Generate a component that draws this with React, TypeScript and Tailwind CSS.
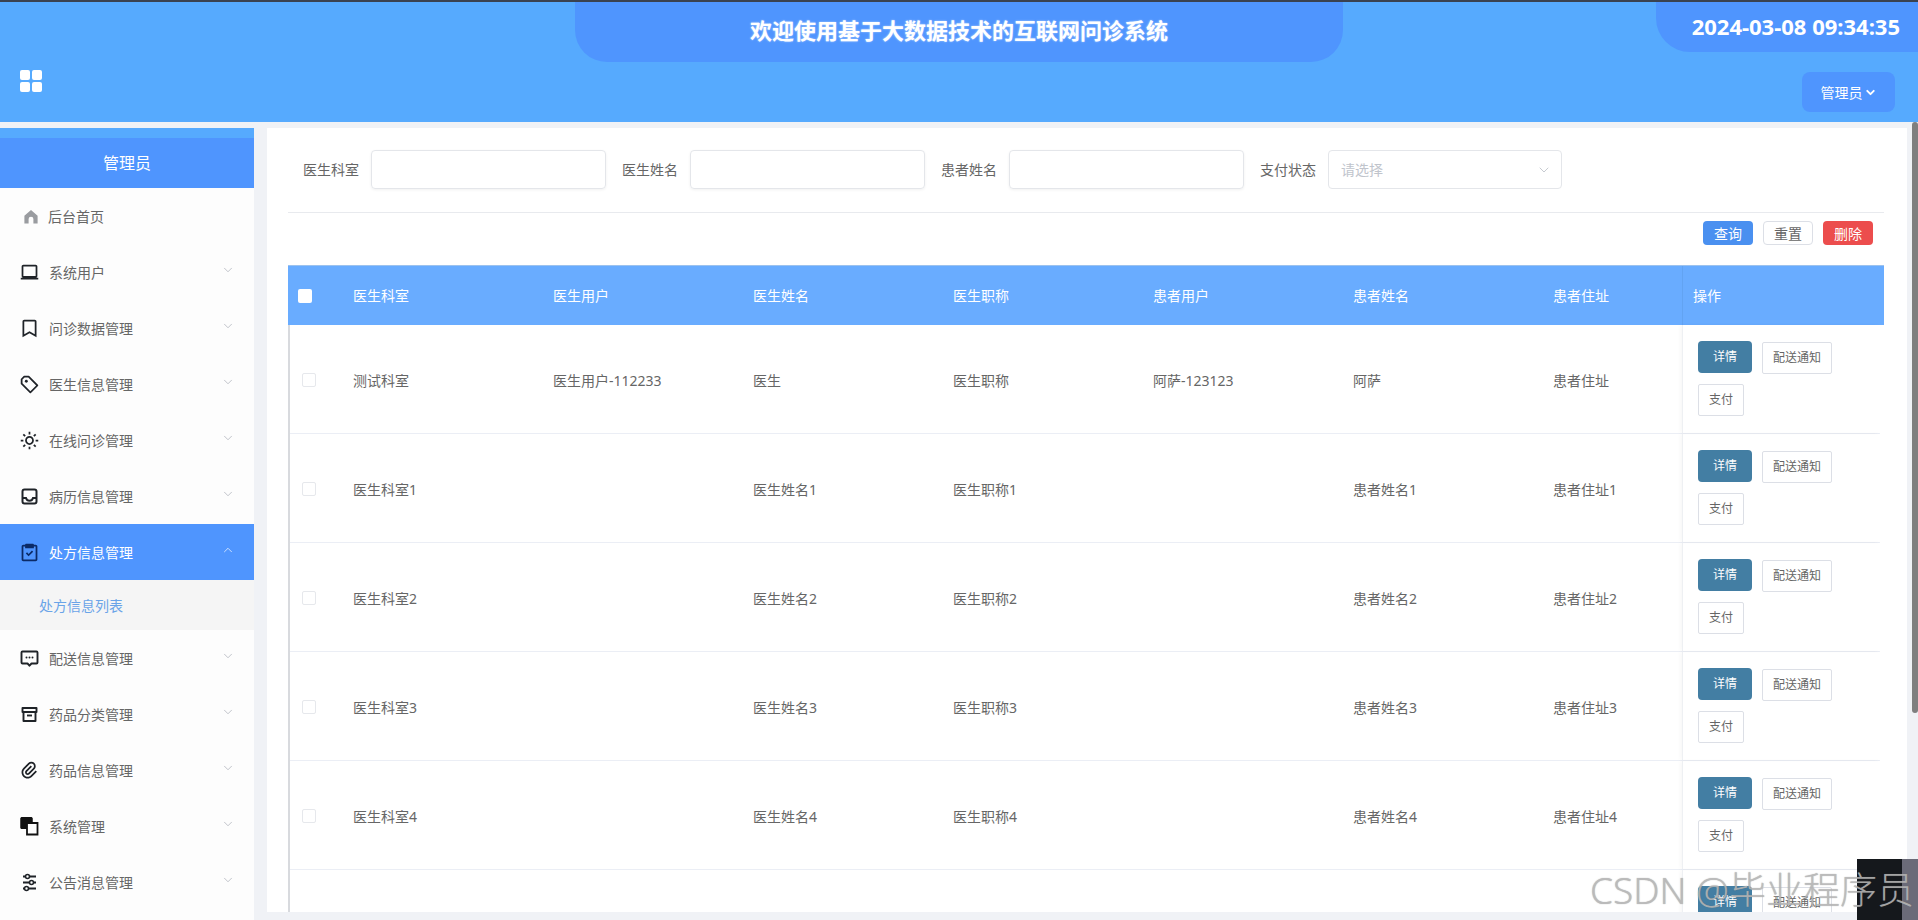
import type { ReactNode } from 'react';
import { ChevronDown, ChevronUp } from 'lucide-react';
import { BiLaptop, BiBookmark, BiPurchaseTagAlt, BiSun, BiTask, BiPaperclip } from 'react-icons/bi';

const iconClass = 'h-[21px] w-[21px] shrink-0 text-[#1f2328]';

function InboxIcon() {
  return (
    <svg viewBox="0 0 21 21" fill="none" className={iconClass}>
      <rect x="3.5" y="3.5" width="14" height="14" rx="2" stroke="currentColor" strokeWidth="2" />
      <path d="M3.5 12h3.5c.5 1.8 1.8 2.8 3.5 2.8s3-1 3.5-2.8h3.5" stroke="currentColor" strokeWidth="2" />
    </svg>
  );
}

function MessageIcon() {
  return (
    <svg viewBox="0 0 21 21" fill="none" className={iconClass}>
      <path
        d="M3.5 3.5h14a1 1 0 0 1 1 1v10a1 1 0 0 1-1 1h-5l-2 2.2-2-2.2h-5a1 1 0 0 1-1-1v-10a1 1 0 0 1 1-1z"
        stroke="currentColor"
        strokeWidth="1.9"
        strokeLinejoin="round"
      />
      <circle cx="7.5" cy="9.5" r="1" fill="currentColor" />
      <circle cx="10.5" cy="9.5" r="1" fill="currentColor" />
      <circle cx="13.5" cy="9.5" r="1" fill="currentColor" />
    </svg>
  );
}

function ArchiveIcon() {
  return (
    <svg viewBox="0 0 21 21" fill="none" className={iconClass}>
      <path d="M3.5 4h14v4h-14zM4.5 8v9h12V8" stroke="currentColor" strokeWidth="1.9" strokeLinejoin="round" />
      <path d="M8 11.5h5" stroke="currentColor" strokeWidth="1.9" />
    </svg>
  );
}

function SlidersIcon() {
  return (
    <svg viewBox="0 0 21 21" fill="none" className={iconClass}>
      <path d="M4 4.5h13M4 10.5h13M4 16.5h13" stroke="currentColor" strokeWidth="1.8" />
      <circle cx="8.5" cy="4.5" r="2" fill="#fdfdfd" stroke="currentColor" strokeWidth="1.6" />
      <circle cx="12.5" cy="10.5" r="2" fill="#fdfdfd" stroke="currentColor" strokeWidth="1.6" />
      <circle cx="7.5" cy="16.5" r="2" fill="#fdfdfd" stroke="currentColor" strokeWidth="1.6" />
    </svg>
  );
}

function CopyIcon() {
  return (
    <svg viewBox="0 0 20 20" className="h-[20px] w-[20px] shrink-0 text-[#111]">
      <rect x="1.5" y="1" width="12" height="12" rx="1.5" fill="currentColor" />
      <path d="M8 7h10.5v11.5H8z" fill="#fdfdfd" stroke="currentColor" strokeWidth="1.8" />
      <path d="M1.5 2.5a1.5 1.5 0 0 1 1.5-1.5h9a1.5 1.5 0 0 1 1.5 1.5V7H8v6H3a1.5 1.5 0 0 1-1.5-1.5z" fill="currentColor" />
    </svg>
  );
}

function HomeIcon() {
  return (
    <svg viewBox="0 0 14 14" className="ml-[4px] mr-[3px] h-[15px] w-[14px] shrink-0 text-[#9a9ca0]">
      <path d="M7 .5 13.6 6.2V14H9.4V9.6a2.4 2.4 0 0 0-4.8 0V14H.4V6.2z" fill="currentColor" />
    </svg>
  );
}

type MenuItem = { label: string; icon: ReactNode; active?: boolean };

const menu: MenuItem[] = [
  { label: '系统用户', icon: <BiLaptop className={iconClass} /> },
  { label: '问诊数据管理', icon: <BiBookmark className={iconClass} /> },
  { label: '医生信息管理', icon: <BiPurchaseTagAlt className={iconClass} /> },
  { label: '在线问诊管理', icon: <BiSun className={iconClass} /> },
  { label: '病历信息管理', icon: <InboxIcon /> },
  { label: '处方信息管理', icon: <BiTask className="h-[21px] w-[21px] shrink-0 text-[#0b2a66]" />, active: true },
  { label: '配送信息管理', icon: <MessageIcon /> },
  { label: '药品分类管理', icon: <ArchiveIcon /> },
  { label: '药品信息管理', icon: <BiPaperclip className="h-[21px] w-[21px] shrink-0 -rotate-45 text-[#1f2328]" /> },
  { label: '系统管理', icon: <span className="flex w-[21px] shrink-0"><CopyIcon /></span> },
  { label: '公告消息管理', icon: <SlidersIcon /> },
];

const headers = ['医生科室', '医生用户', '医生姓名', '医生职称', '患者用户', '患者姓名', '患者住址'];

const rows = [
  ['测试科室', '医生用户-112233', '医生', '医生职称', '阿萨-123123', '阿萨', '患者住址'],
  ['医生科室1', '', '医生姓名1', '医生职称1', '', '患者姓名1', '患者住址1'],
  ['医生科室2', '', '医生姓名2', '医生职称2', '', '患者姓名2', '患者住址2'],
  ['医生科室3', '', '医生姓名3', '医生职称3', '', '患者姓名3', '患者住址3'],
  ['医生科室4', '', '医生姓名4', '医生职称4', '', '患者姓名4', '患者住址4'],
  ['', '', '', '', '', '', ''],
];

function Header() {
  return (
    <header className="relative h-[122px] shrink-0 border-t-2 border-[#3a4250] bg-[#56aafe]">
      <div className="absolute left-[575px] top-0 flex h-[60px] w-[768px] items-center justify-center rounded-b-[32px] bg-[#4f95fe] pb-[4px] text-[22px] font-bold text-white [text-shadow:0_0_2px_rgba(255,255,255,0.6)]">
        欢迎使用基于大数据技术的互联网问诊系统
      </div>
      <div className="absolute right-0 top-0 flex h-[50px] w-[262px] items-center justify-end rounded-bl-[34px] bg-[#4f95fe] pb-[2px] pr-[18px] text-[22px] font-bold text-white">
        2024-03-08 09:34:35
      </div>
      <div className="absolute left-[20px] top-[68px] grid grid-cols-2 gap-[2px]">
        <span className="h-[10px] w-[10px] rounded-[2px] bg-white" />
        <span className="h-[10px] w-[10px] rounded-[2px] bg-white" />
        <span className="h-[10px] w-[10px] rounded-[2px] bg-white" />
        <span className="h-[10px] w-[10px] rounded-[2px] bg-white" />
      </div>
      <button className="absolute left-[1802px] top-[70px] flex h-[40px] w-[93px] items-center justify-center gap-[1px] rounded-[8px] bg-[#4f95fe] text-[14px] text-white">
        管理员
        <ChevronDown className="h-[13px] w-[13px]" strokeWidth={3.5} />
      </button>
    </header>
  );
}

function Sidebar() {
  return (
    <aside className="mt-[6px] flex w-[254px] shrink-0 flex-col bg-[#fdfdfd]">
      <div className="flex h-[60px] items-center justify-center border-t-[10px] border-[#56aafe] bg-[#4f95fe] text-[16px] text-white">
        管理员
      </div>
      <div className="flex h-[56px] items-center pl-[20px] text-[14px] text-[#666]">
        <HomeIcon />
        <span className="ml-[7px]">后台首页</span>
      </div>
      {menu.map((item) => (
        <div key={item.label}>
          <div
            className={
              item.active
                ? 'flex h-[56px] items-center bg-[#4f95fe] pl-[19px] text-[14px] text-white'
                : 'flex h-[56px] items-center pl-[19px] text-[14px] text-[#666]'
            }
          >
            {item.icon}
            <span className="ml-[9px]">{item.label}</span>
            {item.active ? (
              <ChevronUp className="ml-auto mr-[19px] mt-[-5px] h-[14px] w-[14px] text-white" strokeWidth={1.2} />
            ) : (
              <ChevronDown className="ml-auto mr-[19px] mt-[-5px] h-[14px] w-[14px] text-[#a8acb4]" strokeWidth={1.2} />
            )}
          </div>
          {item.active && (
            <div className="flex h-[50px] items-center bg-[#f5f5f5] pl-[39px] text-[14px] text-[#6aa4e8]">
              处方信息列表
            </div>
          )}
        </div>
      ))}
    </aside>
  );
}

function SearchField({ label, select }: { label: string; select?: boolean }) {
  return (
    <>
      <label className="mr-[12px] w-[56px] shrink-0 text-[14px] text-[#666]">{label}</label>
      {select ? (
        <div className="flex h-[39px] w-[234px] shrink-0 items-center justify-between rounded-[4px] border border-[#e4e6ea] pl-[12px] pr-[9px] text-[14px] text-[#c0c4cc]">
          请选择
          <ChevronDown className="h-[16px] w-[16px] text-[#b8bcc4]" strokeWidth={1.2} />
        </div>
      ) : (
        <input className="mr-[16px] h-[39px] w-[235px] shrink-0 rounded-[4px] border border-[#e4e6ea] shadow-[0_1px_3px_rgba(0,0,0,0.06)]" />
      )}
    </>
  );
}

function TableRow({ cells }: { cells: string[] }) {
  return (
    <div className="grid h-[109px] w-[1590px] shrink-0 grid-cols-[51px_repeat(6,200px)_141px_198px] border-b border-[#ebeef5] text-[14px] text-[#666]">
      <div className="flex items-center pl-[12px]">
        <span className="mt-[2px] h-[14px] w-[14px] rounded-[2px] border border-[#e6e8ec] bg-white" />
      </div>
      {cells.map((cell, i) => (
        <div key={i} className="flex items-center pl-[12px] pt-[2px]">
          {cell}
        </div>
      ))}
      <div className="flex flex-wrap content-start items-start gap-x-[10px] gap-y-[10px] border-l border-[#eef0f3] pl-[15px] pt-[16px] shadow-[-2px_0_4px_rgba(0,0,0,0.03)]">
        <button className="h-[32px] w-[54px] rounded-[4px] bg-[#437ea3] text-[12px] text-white">详情</button>
        <button className="mt-[1px] h-[32px] w-[70px] rounded-[2px] border border-[#dcdfe6] bg-white text-[12px] text-[#666]">
          配送通知
        </button>
        <button className="h-[32px] w-[46px] rounded-[2px] border border-[#dcdfe6] bg-white text-[12px] text-[#666]">
          支付
        </button>
      </div>
    </div>
  );
}

function Content() {
  return (
    <main className="mb-[8px] mt-[6px] flex w-[1640px] shrink-0 flex-col overflow-hidden bg-white pl-[21px] pt-[22px]">
      <div className="flex h-[39px] shrink-0 items-center pl-[15px]">
        <SearchField label="医生科室" />
        <SearchField label="医生姓名" />
        <SearchField label="患者姓名" />
        <SearchField label="支付状态" select />
      </div>
      <div className="mt-[23px] h-px w-[1596px] shrink-0 bg-[#e8eaee]" />
      <div className="mt-[8px] flex w-[1585px] shrink-0 justify-end gap-[10px] text-[14px]">
        <button className="h-[24px] w-[50px] rounded-[4px] bg-[#4a90f0] text-white">查询</button>
        <button className="h-[24px] w-[50px] rounded-[4px] border border-[#dcdfe6] bg-white text-[#666]">重置</button>
        <button className="h-[24px] w-[50px] rounded-[4px] bg-[#ec4d4d] text-white">删除</button>
      </div>
      <div className="mt-[20px] flex w-[1596px] flex-col">
        <div className="grid h-[60px] shrink-0 grid-cols-[53px_repeat(6,200px)_141px_202px] border-t border-[#9cc2ee] bg-[#69acff] text-[14px] text-white">
          <div className="flex items-center pl-[10px]">
            <span className="h-[14px] w-[14px] rounded-[2px] bg-white" />
          </div>
          {headers.map((h) => (
            <div key={h} className="flex items-center pl-[12px]">
              {h}
            </div>
          ))}
          <div className="flex items-center border-l border-[#62a3f2] pl-[10px]">操作</div>
        </div>
        <div className="flex flex-col border-l-2 border-[#d8dade]">
          {rows.map((cells, i) => (
            <TableRow key={i} cells={cells} />
          ))}
        </div>
      </div>
    </main>
  );
}

export default function App() {
  return (
    <div className="relative flex h-[920px] w-full flex-col overflow-hidden bg-[#f0f2f6] font-['Noto_Sans','Noto_Sans_CJK_SC',sans-serif]">
      <Header />
      <div className="flex min-h-0 flex-1">
        <Sidebar />
        <div className="w-[13px] shrink-0" />
        <Content />
        <div className="ml-[5px] w-[6px] shrink-0">
          <div className="h-[591px] rounded-[3px] bg-[#7f7f7f]" />
        </div>
      </div>
      <div className="absolute bottom-0 right-0 flex h-[61px] w-[61px]">
        <div className="w-[45px] bg-[#15181c]" />
        <div className="w-[16px] bg-[#6b6b78]" />
      </div>
      <div className="absolute bottom-[6px] right-[4px] whitespace-nowrap text-[37px] font-light leading-[48px] text-[rgba(190,190,190,0.8)] [text-shadow:0_0_1px_rgba(110,110,110,0.6)]">
        CSDN @毕业程序员
      </div>
    </div>
  );
}
